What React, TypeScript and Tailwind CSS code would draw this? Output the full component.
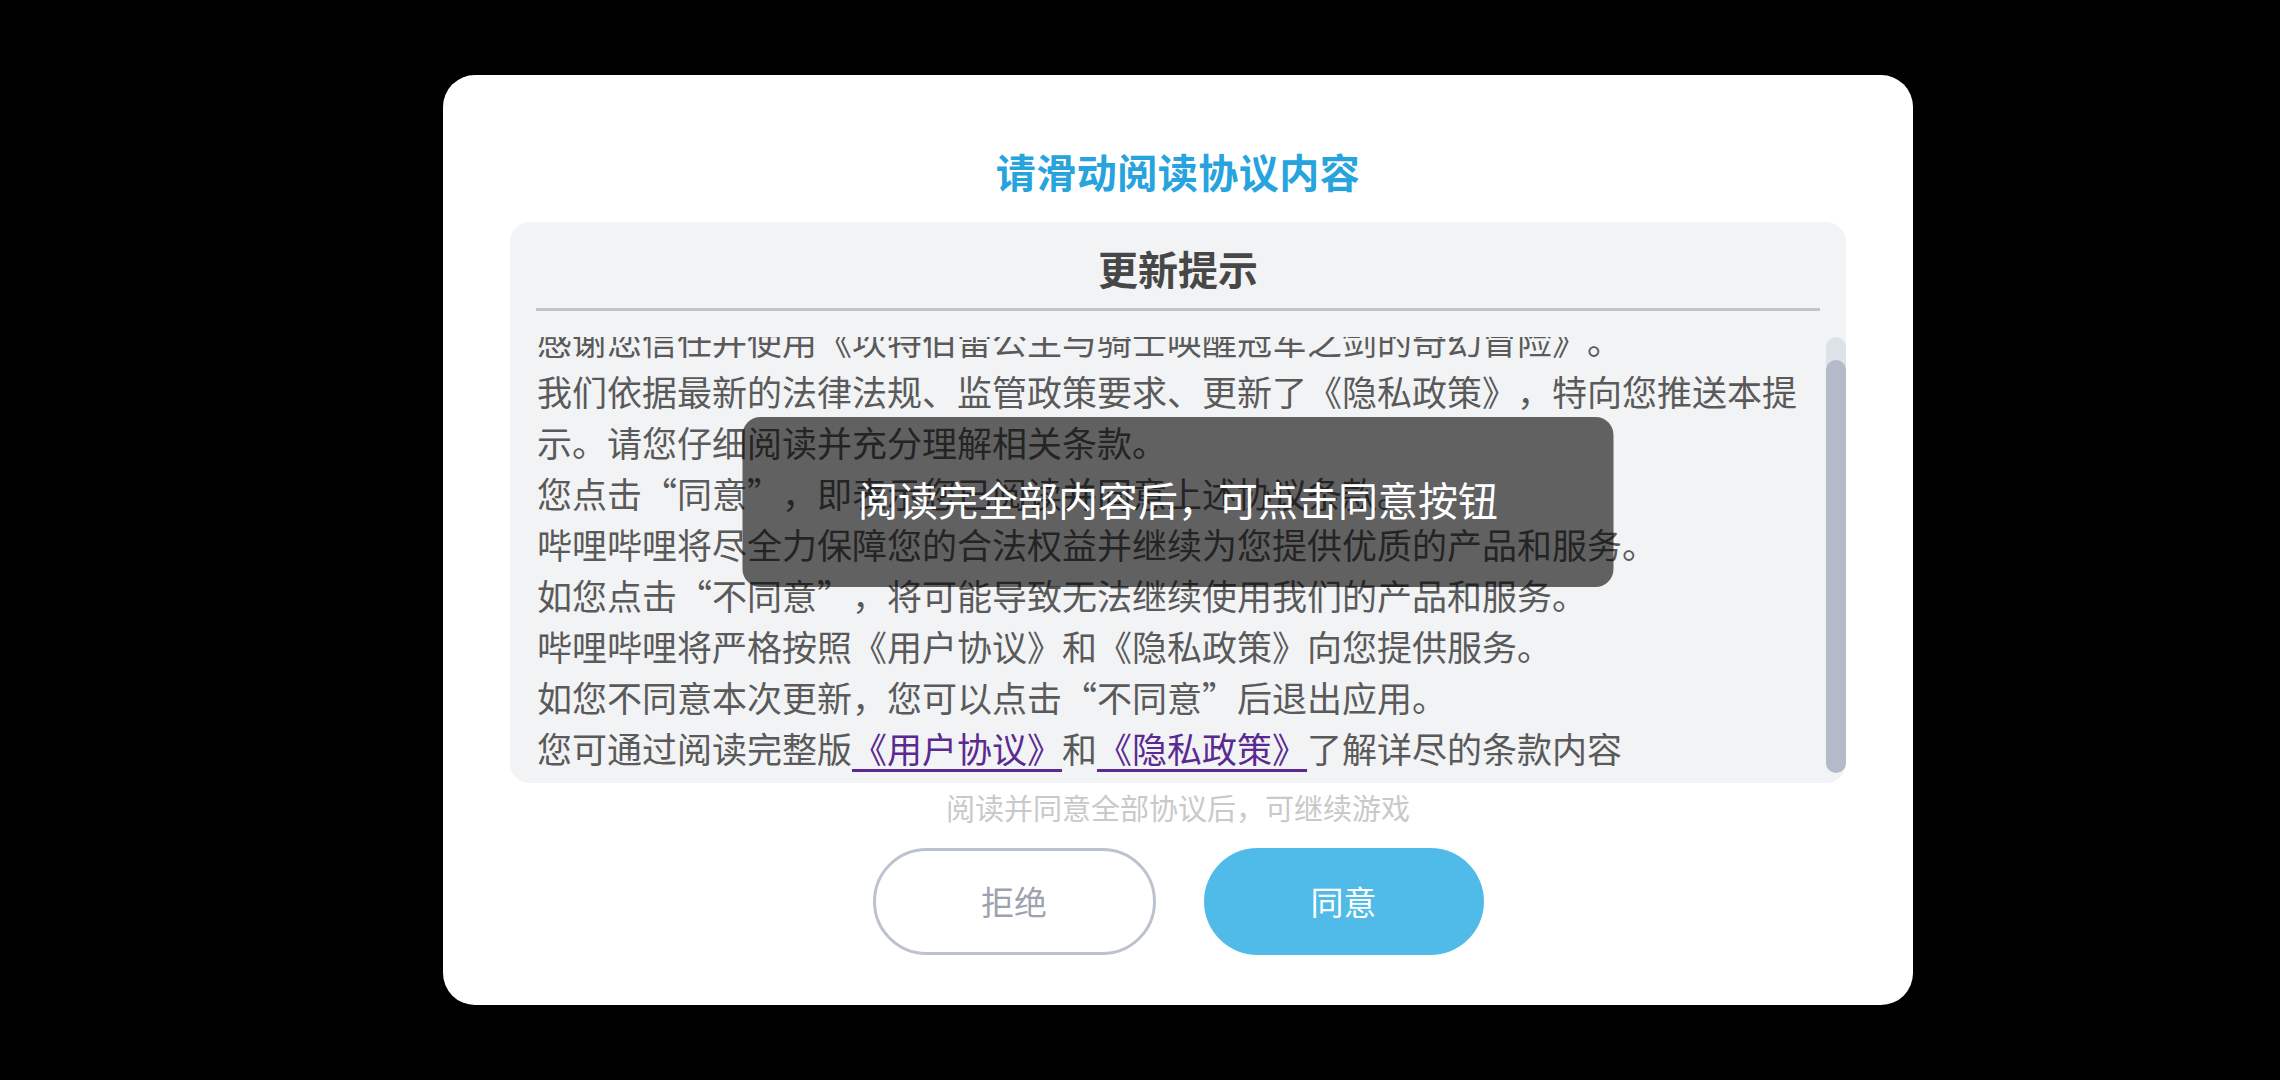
import React from "react";

const cjk = { fontFamily: '"Noto Sans CJK SC", "Noto Sans", sans-serif' };

const lines: React.ReactNode[] = [
  "感谢您信任并使用《坎特伯雷公主与骑士唤醒冠军之剑的奇幻冒险》。",
  "我们依据最新的法律法规、监管政策要求、更新了《隐私政策》，特向您推送本提示。请您仔细阅读并充分理解相关条款。",
  "您点击“同意”，即表示您已阅读并同意上述协议条款。",
  "哔哩哔哩将尽全力保障您的合法权益并继续为您提供优质的产品和服务。",
  "如您点击“不同意”，将可能导致无法继续使用我们的产品和服务。",
  "哔哩哔哩将严格按照《用户协议》和《隐私政策》向您提供服务。",
  "如您不同意本次更新，您可以点击“不同意”后退出应用。",
];

export default function App() {
  return (
    <div lang="zh-CN" className="w-[2280px] h-[1080px] bg-black flex items-center justify-center pl-[76px] [text-spacing-trim:space-all]" style={cjk}>
      <div className="relative w-[1470px] bg-white rounded-[32px] px-[67px] pt-[72px] pb-[50px] flex flex-col items-center">
        <div className="text-[40px] leading-[48px] font-bold text-[#27a3dd] tracking-[0.5px]">请滑动阅读协议内容</div>

        {/* agreement panel */}
        <div className="mt-[27px] w-full bg-[#f2f3f5] rounded-[20px] pt-[22px] pb-[10px] flex flex-col">
          <div className="text-center text-[40px] leading-[48px] font-bold text-[#474747]">更新提示</div>
          <div className="mt-[16px] mx-[26px] h-[3px] bg-[#c4c4c4]" />
          <div className="mt-[26px] flex h-[436px]">
            <div className="ml-[27px] w-[1277px] overflow-hidden flex flex-col justify-end text-[35px] leading-[51px] text-[#5a5a5a]">
              {lines.map((l, i) => (
                <p key={i}>{l}</p>
              ))}
              <p>
                您可通过阅读完整版<span className="text-[#5b2a91] underline underline-offset-[6px]">《用户协议》</span>和<span className="text-[#5b2a91] underline underline-offset-[6px]">《隐私政策》</span>了解详尽的条款内容
              </p>
            </div>
            <div className="ml-auto w-[20px] bg-[#dde1e8] rounded-full flex flex-col justify-end">
              <div className="h-[413px] bg-[#b3bbca] rounded-full" />
            </div>
          </div>
        </div>

        <div className="mt-[6px] text-[29px] leading-[36px] text-[#c9c9c9]">阅读并同意全部协议后，可继续游戏</div>

        <div className="mt-[23px] flex gap-[48px]">
          <button className="w-[283px] h-[107px] rounded-full border-[3px] border-[#bdc2cf] bg-white text-[33px] text-[#9da2af]">拒绝</button>
          <button className="w-[280px] h-[107px] rounded-full bg-[#50bbe8] text-[33px] text-white">同意</button>
        </div>

        {/* toast */}
        <div className="absolute left-1/2 -translate-x-1/2 top-[342px] w-[871px] h-[170px] rounded-[18px] bg-black/60 flex items-center justify-center pb-[6px]">
          <span className="text-[40px] leading-[48px] text-white">阅读完全部内容后，可点击同意按钮</span>
        </div>
      </div>
    </div>
  );
}
